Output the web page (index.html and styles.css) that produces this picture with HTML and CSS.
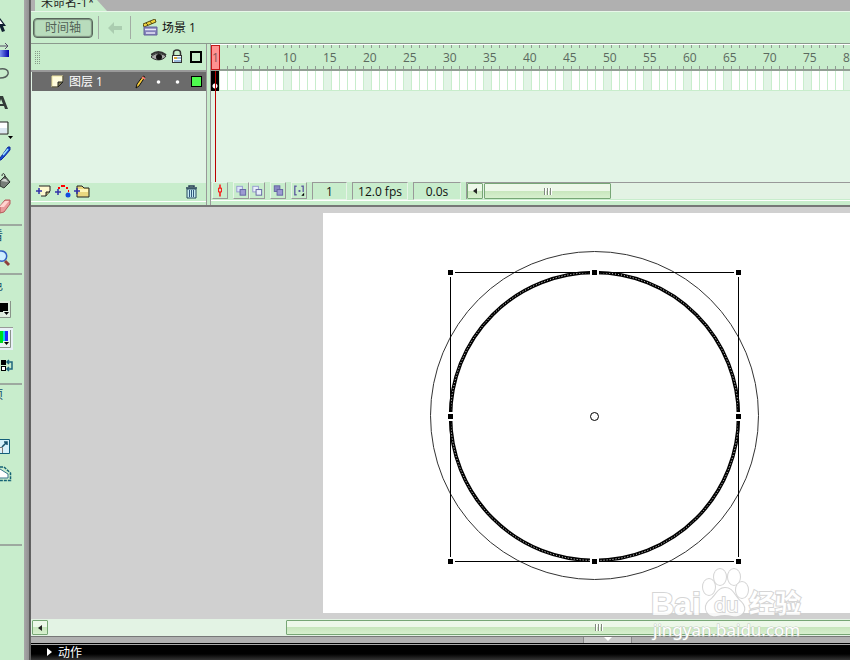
FILE: index.html
```html
<!DOCTYPE html>
<html lang="zh-CN">
<head>
<meta charset="utf-8">
<title>未命名-1</title>
<link rel="stylesheet" href="styles.css">
</head>
<body>
<div class="app">
  <aside class="tools" aria-label="工具">
    <div class="group first">
      <button class="tool" aria-label="选择"><svg viewBox="0 0 24 26"><path d="M0 7L6 15H3L5 20L2 21L0 16" fill="#102030"/><path d="M0 9L3 13H0" fill="#fff"/></svg></button>
      <button class="tool" aria-label="渐变变形"><svg viewBox="0 0 24 26"><defs><linearGradient id="blue"><stop stop-color="#7a90f0"/><stop offset="1" stop-color="#0000a8"/></linearGradient></defs><rect y="13" width="9" height="7" fill="url(#blue)"/><path d="M0 9H7M5 6L8 9L5 12" stroke="#554c66" fill="none"/></svg></button>
      <button class="tool" aria-label="套索"><svg viewBox="0 0 24 26"><path d="M0 6C5 5 9 7 8 11C7 14 3 15 0 15" stroke="#555f5c" stroke-width="1.5" fill="none"/></svg></button>
      <button class="tool" aria-label="文本"><svg viewBox="0 0 24 26"><path d="M0 7L3 7L8 20H5L4 17H0V15H3L1 10L0 13" fill="#333b38"/></svg></button>
      <button class="tool" aria-label="矩形"><svg viewBox="0 0 24 26"><path d="M0 7H7V19H0" fill="#fff"/><path d="M0 13H7V18H0" fill="#dbe7ef"/><path d="M0 7H8V19H0" stroke="#222" fill="none"/><path d="M8 21H13L10.500 24Z"/></svg></button>
      <button class="tool" aria-label="刷子"><svg viewBox="0 0 24 26"><path d="M0 17L3 13L8 6L10 6V9L4 16L1 19L0 19" fill="#174bd2" stroke="#102b95"/><path d="M3 14L8 8" stroke="#9ce4ff" stroke-width="1.500"/></svg></button>
      <button class="tool" aria-label="颜料桶"><svg viewBox="0 0 24 26"><path d="M0 14L5 9L10 15L4 21L0 19Z" fill="#777d78" stroke="#303832"/><path d="M1 14L5 11L8 15" fill="#d4d8d4"/><path d="M2 9C2 5 6 6 5 12" stroke="#333" fill="none"/></svg></button>
      <button class="tool" aria-label="橡皮擦"><svg viewBox="0 0 24 26"><path d="M0 13L5 7H10V11L4 19L0 20Z" fill="#e99b9b" stroke="#b55b5b"/><path d="M0 13L5 8H9L4 14H0" fill="#ffd4d0"/></svg></button>
    </div>
    <div class="group view">
      <div class="tool-label"><span>看</span></div>
      <button class="tool" aria-label="缩放"><svg viewBox="0 0 24 26"><path d="M0 6C7 5 8 12 5 15C3 17 1 16 0 16" fill="#cfeeff" stroke="#315fc2" stroke-width="1.500"/><path d="M5 16L9 20" stroke="#8d403b" stroke-width="3"/></svg></button>
    </div>
    <div class="group colors">
      <div class="tool-label"><span>色</span></div>
      <button class="tool" aria-label="笔触颜色"><svg viewBox="0 0 24 28"><path d="M0 4H10V20H0" fill="#dcebdc"/><path d="M0 20.500H10.500V4" stroke="#899389" fill="none"/><path d="M0 6H8V15H0"/><path d="M3 14H10V19H3" fill="#e3efe3"/><path d="M4 15H9L6.500 18Z"/></svg></button>
      <button class="tool" aria-label="填充颜色"><svg viewBox="0 0 24 28"><path d="M0 2H13V25H0" fill="#e8f0f6"/><path d="M0 2.500H13" stroke="#999"/><path d="M0 6H3V18H0" fill="#00d820"/><path d="M3 6H5V18H3" fill="#00d8df"/><path d="M5 6H8V16H5" fill="#2424ff"/><path d="M3 16H10V21H3" fill="#eaf3ea"/><path d="M4 17H9L6.500 20Z"/><path d="M0 22.500H10.500V5" stroke="#899389" fill="none"/></svg></button>
      <button class="tool" aria-label="交换颜色"><svg viewBox="0 0 24 28"><rect x="1" y="7" width="5" height="5"/><rect x="1.500" y="13.500" width="4" height="4" fill="#fff" stroke="#000"/><path d="M7 9H12V16H7M9 7L7 9L9 11M9 14L7 16L9 18" stroke="#1e667d" stroke-width="1.500" fill="none"/></svg></button>
    </div>
    <div class="group options">
      <div class="tool-label"><span>项</span></div>
      <button class="tool" aria-label="缩放选项"><svg viewBox="0 0 24 28"><path d="M0 7.500H9.500V21.500H0" fill="#d7f1fa" stroke="#145f7a"/><path d="M2 15L7 10M4 10H7V13" stroke="#16516d" stroke-width="1.500" fill="none"/><path d="M-1 15.500H2.500V21" stroke="#777" fill="#eee"/></svg></button>
      <button class="tool" aria-label="封套"><svg viewBox="0 0 24 28"><path d="M0 9L8 14V18H0" fill="#fff" stroke="#38758b"/><path d="M0 7H4L10.500 13V20.500H0" stroke="#146274" stroke-width="1.500" stroke-dasharray="3 1" fill="none"/></svg></button>
    </div>
  </aside>
  <div class="rail"></div>
  <main class="main">
    <nav class="tabs"><a class="tab" href="#doc">未命名-1*</a></nav>
    <header class="editbar" id="doc">
      <button class="timeline-button">时间轴</button>
      <button class="back" aria-label="返回"><svg width="14" height="12" viewBox="0 0 14 12"><path d="M0 6L6 0V4H14V8H6V12Z" fill="#abcdb0"/></svg></button>
      <div class="scene"><svg width="15" height="17" viewBox="0 0 15 17"><path d="M0 5L12 0L13 3L1 8Z" fill="#efd23a" stroke="#544b16"/><path d="M3 4L5 6M7 2L9 5" stroke="#58511d"/><path d="M1 8H14V16H1Z" fill="#8582bb" stroke="#62609a"/><path d="M2 10.500H13M3 14H12" stroke="#e6e6f8" stroke-width="1.500"/></svg><span>场景 1</span></div>
    </header>
    <section class="timeline">
      <div class="layers">
        <div class="layers-head"><span class="drag"></span>
          <svg width="52" height="16" viewBox="0 0 52 16"><path d="M0 8C4 4 8 3 15 7C12 12 4 12 0 8" fill="#aaa" stroke="#333"/><path d="M0 6Q7 0 15 6" fill="none" stroke="#333" stroke-width="2"/><circle cx="8" cy="8" r="3" fill="#111"/><path d="M22.500 7V4Q22.500 1 26 1T29.500 4V7" stroke="#333" fill="none" stroke-width="1.500"/><rect x="21.500" y="6.500" width="9" height="7" fill="#fff" stroke="#333"/><path d="M23 9H26" stroke="#d6a638" stroke-width="2"/><path d="M26 9H30M23 12H30" stroke="#3a77ba"/><rect x="40" y="3" width="10" height="10" fill="#c8edcc" stroke="#000" stroke-width="2"/></svg>
        </div>
        <div class="layer"><svg class="sheet" width="13" height="13" viewBox="0 0 13 13"><path d="M1 1H12V7L7 12H1Z" fill="#fffcdc" stroke="#eadf99"/><path d="M7 12V7H12" fill="#807d50" stroke="#222"/><path d="M1 12H7L12 7V1" stroke="#222" fill="none"/></svg><span class="layer-name">图层 1</span>
          <svg width="69" height="16" viewBox="0 0 69 16"><path d="M2 10L8 2L10 3L4 12L1 14Z" fill="#f7cc3b" stroke="#111"/><path d="M7 3L10 5" stroke="#f57670" stroke-width="2"/><circle cx="23.500" cy="8" r="1.800" fill="#fff"/><circle cx="42.500" cy="8" r="1.800" fill="#fff"/><rect x="56.500" y="2.500" width="10" height="10" fill="#4efb4e" stroke="#000"/></svg>
        </div>
        <div class="layers-foot">
          <svg width="55" height="15" viewBox="0 0 55 15"><g stroke="#222"><path d="M4 2H15V7L11 12H6" fill="#fff9cf"/><path d="M11 12V8H15" fill="#a79f68"/><path d="M42 4V2H47L49 4H54V13H42Z" fill="#ead77f"/></g><path d="M43 5H53V8H43Z" fill="#fff6b8"/><path d="M1 7H7M4 4V10M20 8H26M23 5V11M39 7H45M42 4V10" stroke="#3232a8" stroke-width="1.500"/><path d="M23 4H25M26 2H30M31 4H33M33 7H34" stroke="#f00" stroke-width="2"/><circle cx="33" cy="11" r="2.500" fill="#124be0"/></svg>
          <button class="plain" aria-label="删除图层"><svg width="13" height="14" viewBox="0 0 13 14"><path d="M1 3H12M4 2V1H9V2" stroke="#263d55" stroke-width="1.500" fill="none"/><path d="M2 4H11V13H2Z" fill="#c7ecf3" stroke="#26485c"/><path d="M4.500 5V12M6.500 5V12M8.500 5V12" stroke="#31577c"/></svg></button>
        </div>
      </div>
      <div class="frames">
        <div class="ruler"><span class="current">1</span><ol class="numbers"><li>5</li><li>10</li><li>15</li><li>20</li><li>25</li><li>30</li><li>35</li><li>40</li><li>45</li><li>50</li><li>55</li><li>60</li><li>65</li><li>70</li><li>75</li><li>80</li></ol></div>
        <div class="track"><span class="keyframe"></span></div>
        <div class="empty"></div>
        <div class="controls">
          <button class="mini" aria-label="帧居中"><svg viewBox="0 0 15 15"><path d="M7.500 1V5M7.500 9V14" stroke="#f00" stroke-width="1.500"/><rect x="6" y="5" width="3" height="4" fill="none" stroke="#f00"/></svg></button>
          <span class="pair"><button class="mini" aria-label="绘图纸外观"><svg viewBox="0 0 15 15"><rect x="3" y="3" width="6" height="6" fill="#dde5fa" stroke="#9599cf"/><rect x="6.500" y="6.500" width="6" height="6" fill="#9c9bd2" stroke="#6262a1"/></svg></button><button class="mini" aria-label="绘图纸外观轮廓"><svg viewBox="0 0 15 15"><rect x="3" y="3" width="6" height="6" fill="#e8f0fa" stroke="#9599cf"/><rect x="6.500" y="6.500" width="6" height="6" fill="#e8f0fa" stroke="#6262a1"/></svg></button></span>
          <button class="mini" aria-label="编辑多个帧"><svg viewBox="0 0 15 15"><rect x="3.500" y="2.500" width="6" height="6" fill="#8988c3" stroke="#6262a1"/><rect x="6.500" y="6.500" width="6" height="6" fill="#9c9bd2" stroke="#6262a1"/></svg></button>
          <button class="mini" aria-label="修改绘图纸标记"><svg viewBox="0 0 15 15"><path d="M5 3H3V12H5M10 3H12V9" stroke="#6262a1" stroke-width="1.500" fill="none"/><path d="M7 7H9V9H7Z" fill="#55559a"/><path d="M10 13H13V10Z"/></svg></button>
          <output class="count">1</output><output class="count fps">12.0 fps</output><output class="count time">0.0s</output>
          <div class="scrollbar small"><button class="arrow" aria-label="向左滚动"></button><div class="thumb"><i></i></div></div>
        </div>
      </div>
    </section>
    <section class="stage">
      <div class="paper">
        <svg class="drawing" width="527" height="400" viewBox="323 213 527 400">
          <circle cx="594.500" cy="415.500" r="164" fill="none" stroke="#333"/>
          <circle cx="594.500" cy="416.500" r="144" fill="none" stroke="#000" stroke-width="3.500"/>
          <circle cx="594.500" cy="416.500" r="144" fill="none" stroke="#fff" stroke-dasharray="1 2"/>
          <rect x="450.500" y="272.500" width="288" height="289" fill="none" stroke="#000"/>
          <g stroke="#fff" stroke-width="4" paint-order="stroke"><path d="M448 270h5v5h-5zM592 270h5v5h-5zM736 270h5v5h-5zM448 414h5v5h-5zM736 414h5v5h-5zM448 559h5v5h-5zM592 559h5v5h-5zM736 559h5v5h-5z"/></g>
          <circle cx="594.500" cy="416.500" r="4" fill="#fff" stroke="#000"/>
        </svg>
      </div>
    </section>
    <div class="scrollbar wide"><button class="arrow" aria-label="向左滚动"></button><div class="thumb"><i></i></div></div>
    <div class="splitter"><button class="collapse" aria-label="折叠面板"></button></div>
    <footer class="actions"><button class="actions-title"><i></i>动作</button></footer>
    <svg class="watermark" width="160" height="76" viewBox="648 566 160 76">
      <g fill="#fff" stroke="#cecece" stroke-width="2" paint-order="stroke" opacity=".85">
        <text class="brand" x="651" y="615">Bai</text>
        <ellipse cx="709" cy="587" rx="6" ry="8"/><ellipse cx="720" cy="577" rx="6" ry="8"/><ellipse cx="734" cy="577" rx="6" ry="8"/><ellipse cx="742" cy="590" rx="6" ry="8"/>
        <path d="M725 588C717 588 716 597 709 601C702 608 708 618 717 616Q725 614 732 616C743 618 748 609 741 602C734 596 733 588 725 588Z"/>
        <text class="du" x="714" y="612">du</text><text class="experience" x="749" y="613">经验</text>
      </g>
      <text class="site" x="653" y="636">jingyan.baidu.com</text>
    </svg>
  </main>
</div>
</body>
</html>
```
FILE: styles.css
```css
* { box-sizing: border-box; }
body { margin: 0; font: 12px/16px "Open Sans", "Noto Sans CJK SC", sans-serif; color: #111; background: #b0b0b0; }
button { margin: 0; padding: 0; border: 0; background: none; font: inherit; color: inherit; }
svg { display: block; flex: none; }
.app { display: grid; grid-template-columns: 24px 7px minmax(0, 1fr); min-height: 100vh; overflow: hidden; }

.tools { background: #c8edcc; overflow: hidden; }
.group { padding-bottom: 2px; border-bottom: 2px solid #9da99f; margin-right: 2px; }
.first { padding: 11px 0 5px; }
.options { padding-bottom: 56px; }
.tool { display: block; width: 24px; height: 26px; }
.tool svg { width: 24px; height: 100%; }
.colors .tool, .options .tool { height: 28px; }
.tool-label { display: flex; justify-content: flex-end; width: 3px; height: 20px; line-height: 20px; overflow: hidden; color: #14506a; }
.view .tool-label { height: 19px; }
.colors .tool-label { height: 22px; line-height: 22px; }
.options .tool-label { margin-bottom: 27px; }
.rail { background: linear-gradient(90deg, #a8a8a8, #929292 70%, #555 72%, #666); }

.main { position: relative; display: flex; flex-direction: column; min-width: 0; overflow: hidden; }
.tabs { display: flex; height: 11px; padding-left: 4px; background: #b0b0b0; }
.tab { display: flex; align-items: flex-end; width: 72px; height: 11px; padding-left: 6px; overflow: hidden; background: #c8edcc; clip-path: polygon(0 0, 62px 0, 72px 100%, 0 100%); color: #222; text-decoration: none; white-space: nowrap; line-height: 17px; }
.editbar { display: flex; align-items: center; height: 33px; background: #c8edcc; border-top: 1px solid #e8f7e9; border-bottom: 1px solid #8b998d; }
.timeline-button { width: 60px; height: 20px; margin-left: 2px; border: 1px solid #58665b; border-radius: 4px; box-shadow: inset 0 0 1px 1px #7c907f; background: #b8dcbc; color: #526257; line-height: 17px; }
.back { display: flex; align-items: center; justify-content: center; width: 33px; height: 23px; margin-left: 5px; border: solid #a2aca4; border-width: 0 1px; }
.scene { display: flex; align-items: center; gap: 4px; margin-left: 12px; }

.timeline { display: grid; grid-template-columns: 176px minmax(0, 1fr); height: 163px; border-bottom: 2px solid #777; background: #c8edcc; }
.layers { display: flex; flex-direction: column; border-right: 1px solid #999; background: #e2f4e6; }
.layers-head { display: flex; align-items: center; justify-content: space-between; height: 28px; padding: 0 3px 0 4px; background: #c8edcc; border-bottom: 2px solid #999; }
.drag { width: 5px; height: 15px; background: repeating-linear-gradient(#c8edcc 0 1px, transparent 1px 2px), repeating-linear-gradient(90deg, #879a89 0 1px, transparent 1px 2px); }
.layer { display: flex; align-items: center; height: 19px; margin-left: 1px; padding: 0 2px 0 19px; background: #6b6b6b; color: #fff; }
.layer-name { flex: 1; padding-left: 5px; line-height: 18px; }
.layers-foot { display: flex; align-items: center; justify-content: space-between; height: 17px; margin-top: auto; margin-bottom: 5px; padding: 0 8px 0 4px; background: #c8edcc; box-shadow: 0 1px #c8edcc, 0 2px #fff, 0 5px #c8edcc; }
.frames { display: flex; flex-direction: column; min-width: 0; margin-left: 3px; border-left: 1px solid #999; }
.ruler { display: flex; height: 27px; border-top: 1px solid #fff; border-bottom: 2px solid #929e94; background: repeating-linear-gradient(90deg, #919b93 0 1px, transparent 1px 8px) 0 0 / 100% 3px no-repeat, repeating-linear-gradient(90deg, #919b93 0 1px, transparent 1px 8px) 0 100% / 100% 3px no-repeat, #c8edcc; }
.current { flex: none; width: 9px; height: 25px; border: 1px solid #c21818; background: #ff9292; color: #875555; text-align: center; line-height: 24px; }
.numbers { display: flex; margin: 0; padding: 0 0 0 23px; list-style: none; color: #5b695e; overflow: hidden; }
.numbers li { flex: 0 0 40px; line-height: 26px; }
.track { height: 20px; border-bottom: 1px solid #c8edcc; background: repeating-linear-gradient(90deg, #c8edcc 0 1px, transparent 1px 8px), repeating-linear-gradient(90deg, #fff 0 32px, #e2f4e6 32px 40px); }
.keyframe { display: block; width: 8px; height: 20px; background: linear-gradient(#b00, #b00) 4px 0 / 1px 100% no-repeat, radial-gradient(circle at 4px 15px, #fff 0 2px, transparent 3px), #000; }
.empty { flex: 1; background: linear-gradient(90deg, transparent 4px, #b00 4px 5px, transparent 5px), #e2f4e6; }
.controls { display: flex; gap: 5px; height: 18px; margin-bottom: 5px; padding-left: 1px; box-shadow: 0 1px #fff, 0 2px #c8edcc; }
.pair { display: flex; }
.mini { width: 16px; height: 17px; border: 1px solid #e8f5e9; border-right-color: #999; border-bottom-color: #999; }
.mini svg { width: 14px; height: 15px; }
.count { width: 35px; height: 18px; border: 1px solid #999; border-right-color: #e7f4e8; border-bottom-color: #e7f4e8; text-align: center; white-space: nowrap; line-height: 17px; }
.fps { width: 56px; }
.time { width: 48px; }

.scrollbar { display: flex; flex: none; overflow: hidden; background: #e3f3e4; }
.small { flex: 1; height: 17px; border-top: 1px solid #999; border-left: 1px solid #999; }
.small .thumb { flex: 0 0 127px; margin-left: 1px; }
.wide { height: 18px; padding: 1px; border-bottom: 1px solid #777; }
.wide .arrow, .wide .thumb { height: 15px; }
.wide .thumb { flex: 0 0 625px; margin-left: 238px; }
.arrow, .thumb { display: flex; align-items: center; justify-content: center; height: 16px; border: 1px solid #77a675; border-radius: 1px; background: linear-gradient(#edf8e9 48%, #c8e6bd 50%, #d7f0ce); }
.arrow { flex: 0 0 16px; }
.arrow::after { content: ""; border: 3px solid transparent; border-right: 4px solid #222; border-left: 0; }
.thumb i { width: 8px; height: 7px; background: repeating-linear-gradient(90deg, #81887f 0 1px, #fff 1px 2px, transparent 2px 3px); }

.stage { flex: 1; padding: 6px 0 6px 292px; background: #d0d0d0; }
.paper { min-height: 400px; height: 100%; background: #fff; overflow: hidden; }
.splitter { height: 6px; background: #b0b0b0; padding-left: 552px; }
.collapse { display: flex; justify-content: center; width: 49px; height: 6px; background: #c8c8c8; border: 1px solid #888; border-width: 0 1px; }
.collapse::after { content: ""; border: 4px solid transparent; border-top-color: #fff; border-bottom: 0; }
.actions { display: flex; height: 17px; border-top: 1px solid #000; background: linear-gradient(#aaa 1px, #000 1px 10px, #333); color: #fff; }
.actions-title { display: flex; align-items: center; gap: 6px; padding-left: 16px; line-height: 17px; }
.actions-title i { border: 4px solid transparent; border-left: 5px solid #fff; border-right: 0; }
.watermark { position: absolute; right: 42px; bottom: 18px; }
.brand { font: bold 32px "Liberation Sans", sans-serif; }
.du { font: 20px "Open Sans", sans-serif; }
.experience { font: bold 26px "Noto Sans CJK SC", sans-serif; }
.site { font: 17px "Noto Sans", sans-serif; fill: #fff; stroke: #c3cbc3; stroke-width: 1px; paint-order: stroke; }
```
